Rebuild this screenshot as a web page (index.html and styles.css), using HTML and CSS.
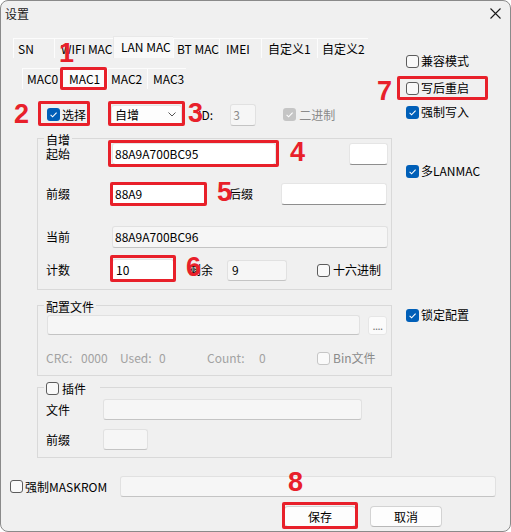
FILE: index.html
```html
<!DOCTYPE html>
<html lang="zh-CN">
<head>
<meta charset="utf-8">
<title>设置</title>
<link rel="stylesheet" href="styles.css">
</head>
<body>
<div class="window">
  <div class="titlebar">
    <span class="title">设置</span>
    <svg class="close" viewBox="0 0 11 11" width="11" height="11"><path d="M0.5 0.5 L10.5 10.5 M10.5 0.5 L0.5 10.5" stroke="#1a1a1a" stroke-width="1.1" fill="none"/></svg>
  </div>
  <div class="content">
    <div class="main">
      <div class="tabs">
        <div class="tab t-sn">SN</div>
        <div class="tab t-wifi">WIFI MAC</div>
        <div class="tab t-lan active">LAN MAC</div>
        <div class="tab t-bt">BT MAC</div>
        <div class="tab t-imei">IMEI</div>
        <div class="tab t-c1">自定义1</div>
        <div class="tab t-c2">自定义2</div>
      </div>
      <div class="subtabs">
        <div class="subtab s0">MAC0</div>
        <div class="subtab s1 active">MAC1</div>
        <div class="subtab s2">MAC2</div>
        <div class="subtab s3">MAC3</div>
      </div>
      <div class="row-select">
        <label class="check c-sel"><span class="box on"><svg viewBox="0 0 13 13"><path d="M3.6 6.9 L5.6 8.8 L9.6 4.6" stroke="#fff" stroke-width="1.1" fill="none"/></svg></span>选择</label>
        <div class="combo"><span>自增</span><svg class="chev" viewBox="0 0 8 5" width="8" height="5"><path d="M0.5 0.5 L4 4 L7.5 0.5" stroke="#555" stroke-width="1" fill="none"/></svg></div>
        <span class="id-label">ID:</span>
        <div class="inp dis id-inp"><span class="gray">3</span></div>
        <label class="check c-bin disabled"><span class="box dis-on"><svg viewBox="0 0 13 13"><path d="M3.6 6.9 L5.6 8.8 L9.6 4.6" stroke="#fff" stroke-width="1.1" fill="none"/></svg></span>二进制</label>
      </div>

      <div class="group g1">
        <div class="g-title">自增</div>
        <div class="frow r-start">
          <span class="lbl">起始</span>
          <div class="inp w-start">88A9A700BC95</div>
          <div class="inp w-small"></div>
        </div>
        <div class="frow r-prefix">
          <span class="lbl">前缀</span>
          <div class="inp w-prefix">88A9</div>
          <span class="lbl2 l-suffix">后缀</span>
          <div class="inp w-suffix"></div>
        </div>
        <div class="frow r-cur">
          <span class="lbl">当前</span>
          <div class="inp dis w-cur">88A9A700BC96</div>
        </div>
        <div class="frow r-count">
          <span class="lbl">计数</span>
          <div class="inp w-count">10</div>
          <span class="lbl2 l-rem">剩余</span>
          <div class="inp dis w-rem">9</div>
          <label class="check c-hex"><span class="box"></span>十六进制</label>
        </div>
      </div>

      <div class="group g2">
        <div class="g-title">配置文件</div>
        <div class="frow r-file">
          <div class="inp dis w-file"></div>
          <div class="dots-btn">....</div>
        </div>
        <div class="frow r-crc gray-text">
          <span class="k k1">CRC:</span>
          <span class="k k2">0000</span>
          <span class="k k3">Used:</span>
          <span class="k k4">0</span>
          <span class="k k5">Count:</span>
          <span class="k k6">0</span>
          <label class="check c-binfile disabled"><span class="box dis-off"></span>Bin文件</label>
        </div>
      </div>

      <div class="group g3">
        <div class="g-title g-title-check"><span class="box"></span><span>插件</span></div>
        <div class="frow r-plug1">
          <span class="lbl lbl-s">文件</span>
          <div class="inp dis w-plugfile"></div>
        </div>
        <div class="frow r-plug2">
          <span class="lbl lbl-s">前缀</span>
          <div class="inp dis w-plugpre"></div>
        </div>
      </div>
    </div>

    <div class="side">
      <label class="check sc1"><span class="box"></span>兼容模式</label>
      <label class="check sc2"><span class="box"></span>写后重启</label>
      <label class="check sc3"><span class="box on"><svg viewBox="0 0 13 13"><path d="M3.6 6.9 L5.6 8.8 L9.6 4.6" stroke="#fff" stroke-width="1.1" fill="none"/></svg></span>强制写入</label>
      <label class="check sc4"><span class="box on"><svg viewBox="0 0 13 13"><path d="M3.6 6.9 L5.6 8.8 L9.6 4.6" stroke="#fff" stroke-width="1.1" fill="none"/></svg></span>多LANMAC</label>
      <label class="check sc5"><span class="box on"><svg viewBox="0 0 13 13"><path d="M3.6 6.9 L5.6 8.8 L9.6 4.6" stroke="#fff" stroke-width="1.1" fill="none"/></svg></span>锁定配置</label>
    </div>
  </div>

  <div class="mask-row">
    <label class="check c-mask"><span class="box"></span><span class="mask-text">强制MASKROM</span></label>
    <div class="inp dis w-mask"></div>
  </div>

  <div class="btn-row">
    <div class="btn">保存</div>
    <div class="btn">取消</div>
  </div>

  <div class="mark box1"></div>
  <div class="mark box2"></div>
  <div class="mark box3"></div>
  <div class="mark box4"></div>
  <div class="mark box5"></div>
  <div class="mark box6"></div>
  <div class="mark box7"></div>
  <div class="mark box8"></div>

  <span class="num n1">1</span>
  <span class="num n2">2</span>
  <span class="num n3">3</span>
  <span class="num n4">4</span>
  <span class="num n5">5</span>
  <span class="num n6">6</span>
  <span class="num n7">7</span>
  <span class="num n8">8</span>
</div>
</body>
</html>
```

FILE: styles.css
```css
* { box-sizing: border-box; margin: 0; padding: 0; }
html, body { background: #ffffff; }
body {
  margin: 0;
  font-family: "Noto Sans CJK SC", "Noto Sans", sans-serif;
  font-size: 12px;
  line-height: 16px;
  color: #000;
}
.window {
  position: relative;
  width: 511px;
  height: 532px;
  border: 1px solid #8a8a8a;
  border-radius: 8px;
  background: #f0f0f0;
  overflow: hidden;
}
.titlebar {
  height: 25px;
  display: flex;
  align-items: center;
  justify-content: space-between;
  padding: 0 9px 0 4px;
}
.title { color: #1a1a1a; }
.close { display: block; }

.content { display: flex; }
.main { width: 391px; flex: none; padding-left: 12px; }
.side { flex: 1; padding-left: 14px; display: flex; flex-direction: column; }

/* tabs */
.tabs { margin-top: 10px; height: 22px; display: flex; align-items: flex-end; }
.tab {
  height: 20px;
  line-height: 19px;
  padding-left: 6px;
  white-space: nowrap;
  border-top: 1px solid #fcfcfc;
  border-left: 1px solid #fcfcfc;
  flex: none;
}
.tab.active { height: 22px; line-height: 20px; background: #f9f9f9; border-top-color: #e8e8e8; border-left-color: #e8e8e8; padding-left: 7px; }
.t-sn { width: 41px; padding-left: 4px; }
.t-wifi { width: 59px; }
.t-lan { width: 60px; }
.t-bt { width: 46px; padding-left: 3px; }
.t-imei { width: 42px; }
.t-c1 { width: 56px; }
.t-c2 { width: 51px; padding-left: 4px; }

.subtabs { margin-top: 10px; margin-left: 9px; height: 21px; display: flex; align-items: flex-end; }
.subtab {
  height: 21px;
  line-height: 20px;
  padding-left: 4px;
  border-top: 1px solid #fcfcfc;
  border-left: 1px solid #fcfcfc;
  flex: none;
}
.subtab.active { background: #fbfbfb; padding-left: 6px; }
.s0 { width: 40px; }
.s1 { width: 45px; }
.s2 { width: 40px; padding-left: 3px; }
.s3 { width: 39px; padding-left: 5px; }

/* checkbox */
.check { display: flex; align-items: center; gap: 2px; white-space: nowrap; height: 16px; }
.box {
  width: 13px;
  height: 13px;
  flex: none;
  border-radius: 3px;
  border: 1px solid #5c5c5c;
  background: #f9f9f9;
  display: block;
}
.box svg { display: block; width: 13px; height: 13px; }
.box.on { background: #005fb8; border: none; }
.box.dis-on { background: #c5c5c5; border: none; }
.box.dis-off { border-color: #c6c6c6; background: #fafafa; }
.check.disabled { color: #8a8a8a; gap: 3px; }

/* selection row */
.row-select { margin-top: 14px; height: 23px; display: flex; align-items: center; }
.c-sel { margin-left: 34px; }
.combo {
  margin-left: 25px;
  width: 71px;
  height: 20px;
  display: flex;
  align-items: center;
  padding-left: 3px;
  background: #fdfdfd;
  border: 1px solid #e3e3e3;
  border-radius: 3px;
}
.chev { margin-left: auto; margin-right: 5px; display: block; }
.id-label { margin-left: 16px; }
.id-inp { margin-left: 17px; width: 26px; height: 21px; padding-left: 4px; }
.gray { color: #8a8a8a; }
.c-bin { margin-left: 27px; }

/* inputs */
.inp {
  height: 22px;
  flex: none;
  display: flex;
  align-items: center;
  padding-left: 2px;
  background: #ffffff;
  border: 1px solid #e5e5e5;
  border-bottom-color: #8e8e8e;
  border-radius: 3px;
  white-space: nowrap;
}
.inp.dis { background: #f6f6f6; border-color: #e1e1e1; border-bottom-color: #c4c4c4; }

/* group boxes */
.group {
  margin-left: 24px;
  width: 355px;
  border: 1px solid #d9d9d9;
  padding: 0 8px;
}
.g-title {
  width: fit-content;
  height: 15px;
  line-height: 15px;
  margin-top: -7px;
  margin-left: -2px;
  padding: 0 2px;
  background: #f0f0f0;
}
.g-title-check { display: flex; align-items: center; gap: 3px; padding-right: 14px; }
.g-title-check .box { width: 13px; height: 13px; }

.frow { display: flex; align-items: center; height: 22px; }
.lbl { width: 66px; flex: none; }
.lbl-s { width: 57px; }

.g1 { margin-top: 12px; padding-bottom: 8px; }
.r-start { margin-top: -4px; }
.w-start { width: 164px; padding-left: 2px; }
.w-small { width: 39px; margin-left: 73px; }
.r-prefix { margin-top: 18px; }
.w-prefix { width: 93px; }
.l-suffix { margin-left: 24px; width: 24px; flex: none; }
.w-suffix { margin-left: 28px; width: 106px; }
.r-cur { margin-top: 21px; }
.w-cur { width: 276px; }
.r-count { margin-top: 11px; }
.w-count { width: 62px; padding-left: 3px; }
.l-rem { margin-left: 15px; width: 24px; flex: none; }
.w-rem { margin-left: 14px; width: 60px; height: 21px; padding-left: 4px; }
.c-hex { margin-left: 30px; gap: 3px; }

.g2 { margin-top: 15px; padding-bottom: 7px; }
.r-file { margin-top: 1px; height: 20px; }
.w-file { height: 20px; width: 313px; margin-left: 1px; }
.dots-btn {
  margin-left: 8px;
  width: 19px;
  height: 19px;
  flex: none;
  background: #fbfbfb;
  border: 1px solid #e6e6e6;
  border-radius: 3px;
  color: #7a7a7a;
  font-size: 11px;
  line-height: 16px;
  text-align: center;
  letter-spacing: -0.5px;
}
.r-crc { margin-top: 13px; height: 20px; }
.gray-text { color: #a2a2a2; }
.k { flex: none; }
.k1 { width: 35px; }
.k2 { width: 39px; }
.k3 { width: 39px; }
.k4 { width: 48px; }
.k5 { width: 52px; }
.k6 { width: 58px; }
.c-binfile { color: #858585; }

.g3 { margin-top: 11px; padding-bottom: 7px; }
.r-plug1 { margin-top: 3px; height: 21px; }
.w-plugfile { width: 259px; height: 21px; }
.r-plug2 { margin-top: 9px; height: 21px; }
.w-plugpre { width: 45px; height: 21px; }

/* side */
.sc1 { margin-top: 27px; }
.sc2 { margin-top: 11px; }
.sc3 { margin-top: 8px; }
.sc4 { margin-top: 43px; }
.sc5 { margin-top: 128px; }

/* bottom */
.mask-row { margin-top: 18px; height: 21px; display: flex; align-items: center; padding-left: 9px; }
.c-mask { width: 110px; flex: none; }
.w-mask { width: 376px; height: 21px; }
.btn-row { margin-top: 9px; display: flex; gap: 14px; padding-left: 283px; }
.btn {
  width: 72px;
  height: 21px;
  line-height: 19px;
  text-align: center;
  background: #fdfdfd;
  border: 1px solid #d3d3d3;
  border-bottom-color: #b8b8b8;
  border-radius: 4px;
}

/* annotations */
.mark {
  position: absolute;
  border: 3px solid #e8202a;
  border-radius: 2px;
}
.box1 { left: 59px; top: 66px; width: 47px; height: 23px; }
.box2 { left: 37px; top: 100px; width: 52px; height: 25px; }
.box3 { left: 107px; top: 100px; width: 77px; height: 25px; }
.box4 { left: 107px; top: 139px; width: 171px; height: 27px; }
.box5 { left: 109px; top: 181px; width: 97px; height: 24px; }
.box6 { left: 109px; top: 254px; width: 66px; height: 27px; }
.box7 { left: 396px; top: 75px; width: 91px; height: 24px; }
.box8 { left: 281px; top: 501px; width: 76px; height: 27px; }

.num {
  position: absolute;
  font-family: "Liberation Sans", Arial, sans-serif;
  font-weight: bold;
  font-size: 27px;
  line-height: 27px;
  color: #e8202a;
}
.n1 { left: 58px; top: 39px; }
.n2 { left: 13px; top: 100px; }
.n3 { left: 187px; top: 99px; }
.n4 { left: 289px; top: 138px; }
.n5 { left: 216px; top: 178px; }
.n6 { left: 185px; top: 253px; }
.n7 { left: 376px; top: 77px; }
.n8 { left: 287px; top: 468px; }
```
